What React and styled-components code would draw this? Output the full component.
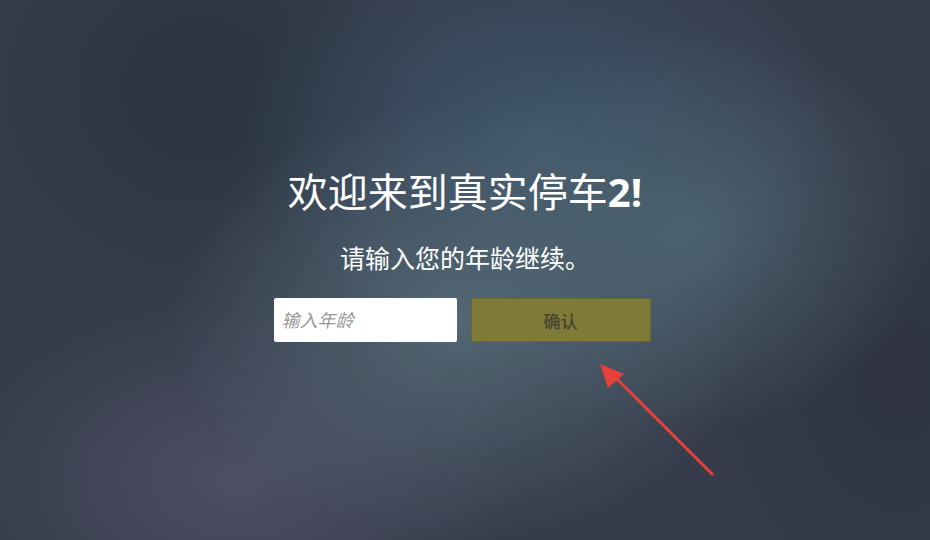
import styled, { createGlobalStyle } from 'styled-components';

const GlobalStyle = createGlobalStyle`
  html, body {
    margin: 0;
    padding: 0;
  }
  body {
    font-family: 'Open Sans', 'Noto Sans CJK SC', sans-serif;
  }
`;

export default function App() {
  return (
    <>
      <GlobalStyle />
      <Page>
        <Gate>
          <Title>
            欢迎来到真实停车<Num>2!</Num>
          </Title>
          <Subtitle>请输入您的年龄继续。</Subtitle>
          <FormRow>
            <AgeInput type="text" placeholder="输入年龄" />
            <ConfirmButton>确认</ConfirmButton>
          </FormRow>
        </Gate>

        {/* 标注箭头 */}
        <Arrow width="130" height="125" viewBox="0 0 130 125">
          <line x1="112" y1="110" x2="12" y2="10" stroke="#e8413b" strokeWidth="3" strokeLinecap="round" />
          <polygon points="0,0 24,10 8,24" fill="#e8413b" />
        </Arrow>
      </Page>
    </>
  );
}

const Page = styled.div`
  position: relative;
  width: 930px;
  height: 540px;
  overflow: hidden;
  background-color: #363c4c;
  background-image:
    radial-gradient(ellipse 290px 220px at 460px 320px, rgba(86, 108, 120, 0.9), rgba(86, 108, 120, 0) 100%),
    radial-gradient(ellipse 240px 200px at 690px 230px, rgba(78, 102, 114, 0.85), rgba(78, 102, 114, 0) 100%),
    radial-gradient(ellipse 300px 220px at 540px 140px, rgba(62, 88, 110, 0.9), rgba(62, 88, 110, 0) 100%),
    radial-gradient(ellipse 280px 180px at 240px 480px, rgba(80, 82, 102, 0.9), rgba(80, 82, 102, 0) 100%),
    radial-gradient(ellipse 240px 220px at 200px 90px, rgba(40, 52, 62, 0.9), rgba(40, 52, 62, 0) 100%),
    radial-gradient(ellipse 200px 260px at 900px 380px, rgba(46, 50, 64, 0.9), rgba(46, 50, 64, 0) 100%);
`;

const Gate = styled.div`
  display: flex;
  flex-direction: column;
  align-items: center;
  padding-top: 167px;
  color: #ffffff;
`;

const Title = styled.h1`
  margin: 0;
  font-size: 40px;
  font-weight: 400;
  line-height: 50px;
  letter-spacing: 0;
`;

const Num = styled.span`
  font-weight: 700;
`;

const Subtitle = styled.p`
  margin: 24px 0 0;
  font-size: 25px;
  line-height: 34px;
`;

const FormRow = styled.div`
  display: flex;
  gap: 14px;
  margin: 23px 6px 0 0;
`;

const AgeInput = styled.input`
  box-sizing: border-box;
  width: 183px;
  height: 44px;
  padding: 0 8px;
  border: none;
  border-radius: 2px;
  background: #ffffff;
  font-family: 'Open Sans', 'Noto Sans CJK SC', sans-serif;
  font-size: 18px;
  outline: none;

  &::placeholder {
    color: #9a9a9a;
    font-style: italic;
  }
`;

const ConfirmButton = styled.button`
  box-sizing: border-box;
  width: 180px;
  height: 44px;
  border: 1px solid #6c6830;
  border-radius: 2px;
  background: #807a38;
  color: #45442f;
  font-family: 'Open Sans', 'Noto Sans CJK SC', sans-serif;
  font-size: 17px;
  font-weight: 500;
  cursor: pointer;
`;

const Arrow = styled.svg`
  position: absolute;
  left: 600px;
  top: 364px;
`;
